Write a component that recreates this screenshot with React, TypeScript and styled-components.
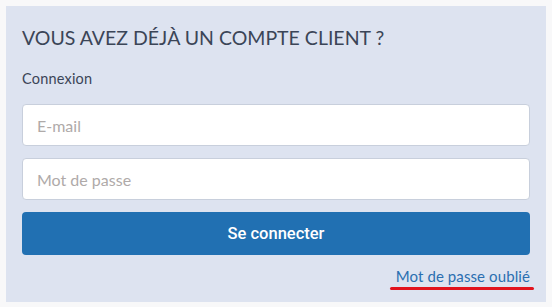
import React from "react";
import styled, { createGlobalStyle } from "styled-components";

const Global = createGlobalStyle`
  html, body { margin: 0; padding: 0; background: #f8f8f9; }
  body { font-family: "Lato", "Noto Sans", sans-serif; }
  * { box-sizing: border-box; }
`;

const Page = styled.div`
  padding: 6px;
  width: 552px;
  height: 307px;
`;

const Panel = styled.section`
  background: #dde3f0;
  width: 540px;
  height: 296px;
  padding: 20px 16px 0 16px;
  display: flex;
  flex-direction: column;
`;

const Title = styled.h2`
  margin: 0;
  font-size: 19.5px;
  line-height: 24px;
  font-weight: 400;
  color: #3b4557;
  letter-spacing: 0;
`;

const Label = styled.div`
  margin-top: 20px;
  font-size: 14.5px;
  line-height: 18px;
  color: #3b4557;
  letter-spacing: 0.2px;
`;

const Form = styled.form`
  margin-top: 16px;
  display: flex;
  flex-direction: column;
  gap: 12px;
`;

const Input = styled.input`
  width: 100%;
  height: 42px;
  border: 1px solid #c8cfdc;
  border-radius: 4px;
  background: #fff;
  padding: 0 14px;
  font-family: "Lato", "Noto Sans", sans-serif;
  font-size: 16px;
  color: #333;
  outline: none;
  &::placeholder { color: #afaaa9; }
`;

const Button = styled.button`
  height: 43px;
  border: none;
  border-radius: 4px;
  background: #2170b2;
  color: #fff;
  font-family: "Roboto", "Lato", sans-serif;
  font-size: 16.5px;
  font-weight: 500;
  cursor: pointer;
`;

const LinkRow = styled.div`
  display: flex;
  justify-content: flex-end;
  margin-top: 12px;
`;

const ForgotLink = styled.a`
  position: relative;
  color: #2b6fb1;
  font-size: 15px;
  line-height: 18px;
  letter-spacing: 0.1px;
  text-decoration: none;
  &::after {
    content: "";
    position: absolute;
    left: -6px;
    right: -4px;
    bottom: -5px;
    height: 3px;
    border-radius: 2px;
    background: #e2131d;
  }
`;

export default function App() {
  return (
    <>
      <Global />
      <Page>
        <Panel>
          <Title>VOUS AVEZ DÉJÀ UN COMPTE CLIENT ?</Title>
          <Label>Connexion</Label>
          <Form onSubmit={(e) => e.preventDefault()}>
            <Input type="email" placeholder="E-mail" />
            <Input type="password" placeholder="Mot de passe" />
            <Button type="submit">Se connecter</Button>
          </Form>
          <LinkRow>
            <ForgotLink href="#">Mot de passe oublié</ForgotLink>
          </LinkRow>
        </Panel>
      </Page>
    </>
  );
}
